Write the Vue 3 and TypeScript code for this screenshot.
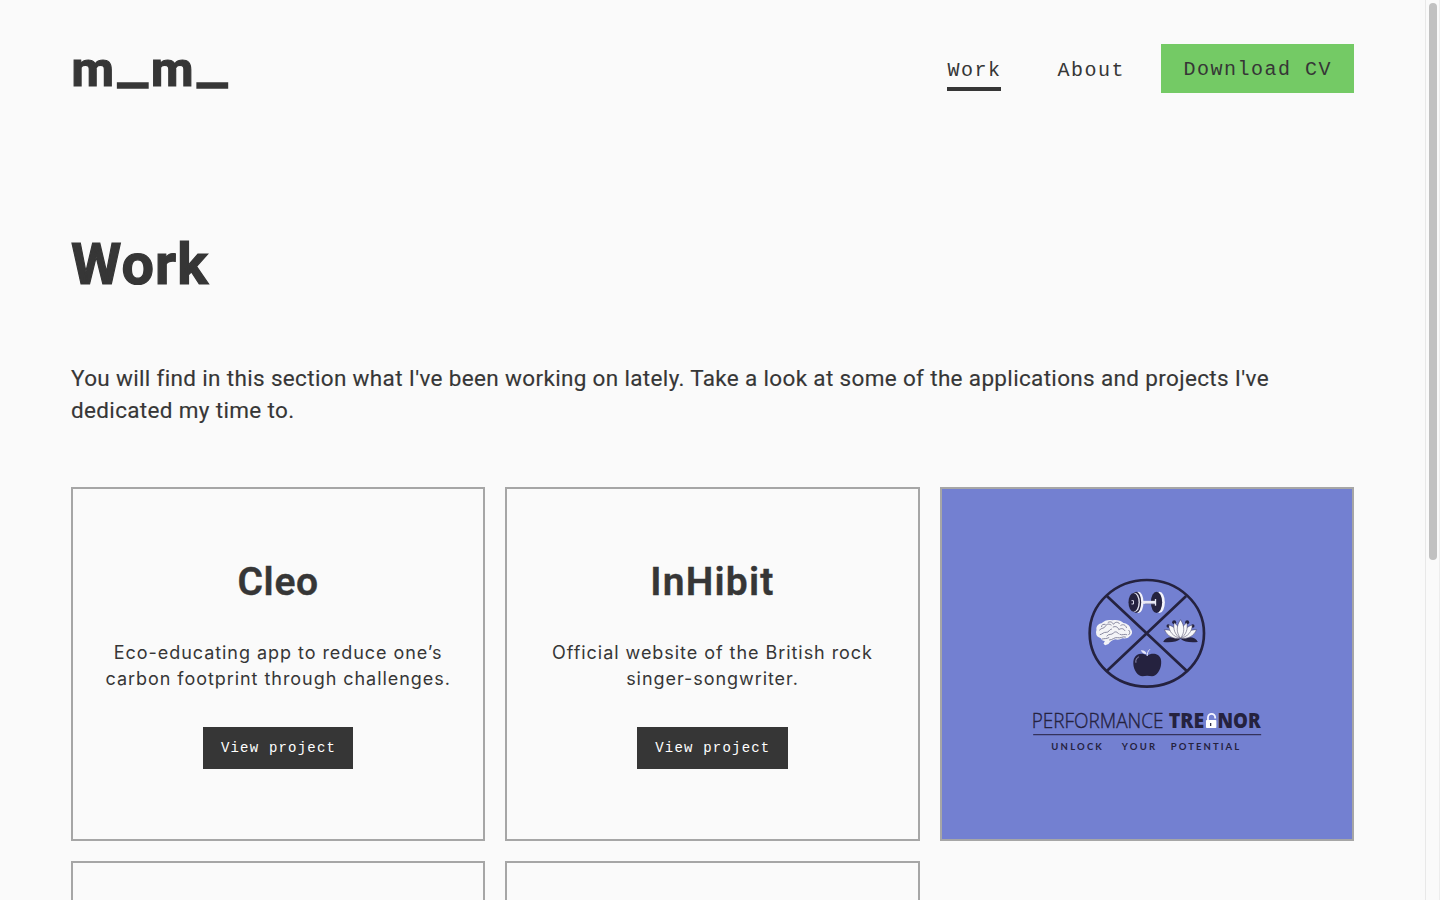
<script setup lang="ts">
interface Project {
  title: string
  lines: string[]
}

const projects: Project[] = [
  { title: 'Cleo', lines: ['Eco-educating app to reduce one’s', 'carbon footprint through challenges.'] },
  { title: 'InHibit', lines: ['Official website of the British rock', 'singer-songwriter.'] },
]
</script>

<template>
  <div class="page">
    <main class="content">
      <header class="header">
        <a class="logo">m<span class="bar">_</span>m<span class="bar">_</span></a>
        <nav class="nav">
          <a class="link active">Work</a>
          <a class="link">About</a>
          <a class="cv">Download CV</a>
        </nav>
      </header>

      <h1>Work</h1>
      <p class="lead">
        <span>You will find in this section what I've been working on lately. Take a look at some of the applications and projects I've</span><br />
        <span>dedicated my time to.</span>
      </p>

      <section class="grid">
        <article v-for="p in projects" :key="p.title" class="card" :class="p.title.toLowerCase()">
          <h2>{{ p.title }}</h2>
          <p class="desc"><span v-for="line in p.lines" :key="line">{{ line }}</span></p>
          <a class="button">View project</a>
        </article>

        <article class="card cover">
          <svg class="brand" viewBox="942 489 410 350">
            <g class="emblem" transform="translate(1080 570) scale(0.33333)">
              <g fill="none" stroke="#25223f" stroke-width="8">
                <ellipse cx="200" cy="190" rx="171.500" ry="160" />
                <path d="M80 78 320 303M318 78 80 303" />
              </g>
              <!-- dumbbell -->
              <g>
                <ellipse cx="175" cy="97" rx="15" ry="32" fill="#f4f4fb" />
                <ellipse cx="168" cy="97" rx="15" ry="32" fill="#25223f" />
                <ellipse cx="164" cy="97" rx="15" ry="29" fill="#e8e8f4" />
                <ellipse cx="160" cy="97" rx="15" ry="28" fill="#25223f" />
                <path d="M154 92h6v10h-6" fill="none" stroke="#d8d8ea" stroke-width="3" />
                <ellipse cx="238" cy="97" rx="16" ry="32" fill="#f4f4fb" />
                <ellipse cx="229" cy="97" rx="17" ry="32" fill="#25223f" />
                <path d="M188 97h38" stroke="#e8e8f4" stroke-width="9" />
                <path d="M195 102h28" stroke="#77779b" stroke-width="2" />
                <path d="M226 87v20" stroke="#e8e8f4" stroke-width="4" />
              </g>
              <!-- brain -->
              <path d="M49 180c-2-10 5-18 15-20 9-9 21-12 33-9 12-3 25 0 33 8 12 2 20 9 21 17 7 8 6 17-2 22-5 7-13 8-22 7-7 4-14 5-22 3-9 3-15 6-20 14l-10 4-5-5 4-8c-6 0-11-3-12-8-9-3-15-8-14-15-1-3 0-7 1-10Z" fill="#f4f4f7" />
              <g fill="none" stroke="#74748f" stroke-width="2.500" stroke-linecap="round">
                <path d="M58 180c7-8 14-3 18-12 4-7 11-7 17-3M64 170c-1-6 6-8 11-7M84 157c7-4 13 0 16 6 5-8 13-8 18-2M60 194c8-2 10-8 18-7 8 1 9-9 16-10M99 171c8-4 15 1 17 8 7-5 15-4 18 3M122 166c8-5 15 0 17 7M80 198c6-8 14-2 20-9 5-6 12-3 15 2M88 210c10 0 14-9 24-7 10 3 15-5 24-2M119 193c7 5 14-3 21 1M146 181c4 4 4 9 0 13M66 207c7-2 13 0 20-4" />
              </g>
              <!-- lotus -->
              <g stroke="#3a3758" stroke-width="1.500">
                <g fill="#25223f" stroke="none">
                  <circle cx="282" cy="157" r="6" />
                  <circle cx="321" cy="157" r="6" />
                  <circle cx="264" cy="168" r="5" />
                  <circle cx="338" cy="168" r="5" />
                  <path d="M249 216c6-15 25-18 51-9-10 9-27 11-51 9ZM353 216c-6-15-25-18-51-9 10 9 27 11 51 9Z" />
                </g>
                <g fill="#f8f8fa">
                  <path d="M301 205c-23 3-41-8-48-26 20 0 38 8 48 26ZM301 205c23 3 41-8 48-26-20 0-38 8-48 26Z" />
                  <path d="M301 205c-22-5-35-20-35-40 19 6 32 21 35 40ZM301 205c22-5 35-20 35-40-19 6-32 21-35 40Z" />
                  <path d="M301 205c-17-10-23-29-19-47 15 11 22 29 19 47ZM301 205c17-10 23-29 19-47-15 11-22 29-19 47Z" />
                  <path d="M301 205c-13-17-13-37 0-56 13 19 13 39 0 56Z" />
                </g>
              </g>
              <!-- apple -->
              <path d="M201 257c-14-10-34-7-40 10-5 18 2 39 16 49 9 5 16 1 24 1s16 4 24-1c14-10 21-31 17-49-5-16-26-20-41-10Z" fill="#25223f" />
              <path d="M167 277c-1-8 2-13 8-16" fill="none" stroke="#8e8eb5" stroke-width="3" stroke-linecap="round" />
              <path d="M201 258c0-8 2-15 8-20" fill="none" stroke="#e8e8fa" stroke-width="3" />
              <path d="M199 252c-7 1-14-3-17-11 9-1 15 3 17 11Z" fill="#e8e8fa" />
            </g>

            <g class="wordmark">
              <text class="thin" transform="translate(1031.500 728) scale(0.9 1)" textLength="146.500" lengthAdjust="spacingAndGlyphs">PERFORMANCE</text>
              <text class="heavy" x="1168.500" y="728" textLength="35.500" lengthAdjust="spacingAndGlyphs">TRE</text>
              <text class="heavy" x="1217.300" y="728" textLength="43.200" lengthAdjust="spacingAndGlyphs">NOR</text>
            </g>
            <path d="M1207.800 721v-3.500a3.600 3.600 0 0 1 7.200 0v1" fill="none" stroke="#f5f5ff" stroke-width="1.800" />
            <rect x="1205.800" y="720" width="10.400" height="8" rx=".8" fill="#fff" />
            <path d="M1210.500 723v3" stroke="#25223f" stroke-width="1.200" />
            <path d="M1033 734.700h228" stroke="#34325c" stroke-width="1.200" />
            <g class="tagline">
              <text x="1051.200" y="750.400" textLength="50.500">UNLOCK</text>
              <text x="1121.500" y="750.400" textLength="33.500">YOUR</text>
              <text x="1170.500" y="750.400" textLength="68.500">POTENTIAL</text>
            </g>
          </svg>
        </article>

        <article class="card"></article>
        <article class="card"></article>
      </section>
    </main>
    <div class="track"><div class="thumb"></div></div>
  </div>
</template>

<style>
body {
  background: #fafafa;
  overflow: hidden;
}
</style>

<style scoped>
.page {
  display: flex;
  height: 900px;
  overflow: hidden;
  background: #fafafa;
  color: #363636;
}
.content {
  flex: 1;
  box-sizing: border-box;
  padding: 44px 71px 0;
}
.header {
  display: flex;
  justify-content: space-between;
  height: 49px;
}
.logo {
  padding-left: 0.500px;
  font: 700 49px/52px Roboto, sans-serif;
  white-space: nowrap;
  -webkit-text-stroke: 1.2px #363636;
}
.bar {
  font-family: "Liberation Sans", sans-serif;
  font-weight: 400;
  font-size: 49px;
  line-height: 1px;
  vertical-align: 9.500px;
  -webkit-text-stroke: 3.300px #363636;
  margin: 0 4.500px 0 5.300px;
}
.nav {
  display: flex;
  align-items: flex-start;
  font: 20px/50px "Liberation Mono", monospace;
  letter-spacing: 1.5px;
}
.link {
  box-sizing: border-box;
  height: 47px;
  line-height: 53px;
  margin-right: 56px;
}
.link + .link {
  margin-right: 36.500px;
}
.active {
  border-bottom: 4px solid #363636;
}
.cv {
  height: 49px;
  padding: 0 22px;
  line-height: 51px;
  background: #74ca65;
}
h1 {
  margin: 137px 0 0;
  font: 700 57.500px/70px Roboto, sans-serif;
  letter-spacing: 1.100px;
  -webkit-text-stroke: 1.2px #363636;
}
.lead {
  margin: 62px 0 0;
  font: 22.500px/32px Roboto, sans-serif;
  letter-spacing: 0.340px;
  -webkit-text-stroke: 0.15px #363636;
  white-space: nowrap;
}
.grid {
  display: grid;
  grid-template-columns: repeat(3, 1fr);
  grid-auto-rows: 354px;
  gap: 20px;
  margin-top: 61px;
}
.card {
  box-sizing: border-box;
  display: flex;
  flex-direction: column;
  align-items: center;
  border: 2px solid #a6a6a6;
  min-width: 0;
}
h2 {
  margin: 69px 0 0;
  font: 600 39px/48px Roboto, sans-serif;
  letter-spacing: 0.700px;
  -webkit-text-stroke: 0.4px #363636;
}
.inhibit h2 {
  letter-spacing: 1.200px;
}
.desc {
  display: flex;
  flex-direction: column;
  align-items: center;
  margin: 34px 0 0;
  font: 18px/26px Inter, sans-serif;
  letter-spacing: 0.950px;
  white-space: nowrap;
}
.button {
  box-sizing: border-box;
  width: 150.500px;
  height: 42px;
  margin-top: 35px;
  padding-left: 18px;
  background: #363636;
  color: #fff;
  font: 14px/42px "Liberation Mono", monospace;
  letter-spacing: 1.200px;
  white-space: nowrap;
}
.cover {
  background: #7380d1;
}
.brand {
  display: block;
  width: 100%;
  height: 350px;
}
.emblem {
  filter: blur(1.5px);
}
.wordmark {
  fill: #25223f;
  font-family: "Open Sans", sans-serif;
  font-size: 20.500px;
}
.thin {
  font-weight: 300;
  stroke: #25223f;
  stroke-width: 0.35;
}
.heavy {
  font-weight: 800;
}
.tagline {
  fill: #25223f;
  font: 700 9.500px Lato, sans-serif;
}
.track {
  box-sizing: border-box;
  width: 15px;
  padding: 3px 2px 0 3px;
  border-left: 1px solid #e8e8e8;
  border-right: 1px solid #ededed;
}
.thumb {
  width: 8px;
  height: 557px;
  border-radius: 4px;
  background: #c1c1c1;
}
</style>
